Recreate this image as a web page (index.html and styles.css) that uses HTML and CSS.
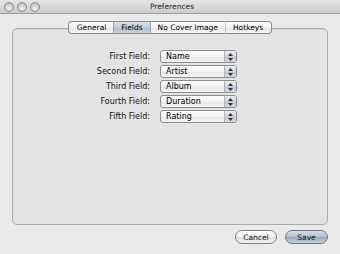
FILE: index.html
```html
<!DOCTYPE html>
<html lang="en">
<head>
  <meta charset="UTF-8">
  <title>Preferences</title>
  <link rel="stylesheet" href="styles.css">
</head>
<body>
  <div class="window">
    <div class="titlebar">
      <div class="lights">
        <span class="light"></span>
        <span class="light"></span>
        <span class="light"></span>
      </div>
      <div class="title">Preferences</div>
    </div>

    <div class="main">
      <div class="tabs">
        <div class="tab first">General</div>
        <div class="tab selected">Fields</div>
        <div class="tab">No Cover Image</div>
        <div class="tab last">Hotkeys</div>
      </div>

      <div class="box">
        <div class="fields">
          <label>First Field:</label>
          <div class="popup"><span>Name</span><i class="stepper"><svg width="5" height="8" viewBox="0 0 5 8"><path d="M0 3L2.5 0L5 3Z M0 5L2.5 8L5 5Z" fill="#333"/></svg></i></div>

          <label>Second Field:</label>
          <div class="popup"><span>Artist</span><i class="stepper"><svg width="5" height="8" viewBox="0 0 5 8"><path d="M0 3L2.5 0L5 3Z M0 5L2.5 8L5 5Z" fill="#333"/></svg></i></div>

          <label>Third Field:</label>
          <div class="popup"><span>Album</span><i class="stepper"><svg width="5" height="8" viewBox="0 0 5 8"><path d="M0 3L2.5 0L5 3Z M0 5L2.5 8L5 5Z" fill="#333"/></svg></i></div>

          <label>Fourth Field:</label>
          <div class="popup"><span>Duration</span><i class="stepper"><svg width="5" height="8" viewBox="0 0 5 8"><path d="M0 3L2.5 0L5 3Z M0 5L2.5 8L5 5Z" fill="#333"/></svg></i></div>

          <label>Fifth Field:</label>
          <div class="popup"><span>Rating</span><i class="stepper"><svg width="5" height="8" viewBox="0 0 5 8"><path d="M0 3L2.5 0L5 3Z M0 5L2.5 8L5 5Z" fill="#333"/></svg></i></div>
        </div>
      </div>

      <div class="buttons">
        <button class="btn">Cancel</button>
        <button class="btn default">Save</button>
      </div>
    </div>
  </div>
</body>
</html>
```

FILE: styles.css
```css
body {
  margin: 0;
  font-family: "DejaVu Sans", sans-serif;
  font-size: 8px;
  color: #000;
}

.window {
  width: 340px;
  height: 254px;
  overflow: hidden;
  background: repeating-linear-gradient(#ededed 0, #ededed 1px, #e7e7e7 1px, #e7e7e7 2px);
}

.titlebar {
  height: 13px;
  display: flex;
  align-items: center;
  background: linear-gradient(#e6e6e6, #cdcdcd);
  border-bottom: 1px solid #9c9c9c;
}

.lights {
  display: flex;
  gap: 3px;
  padding-left: 4px;
  width: 60px;
}

.light {
  width: 8px;
  height: 8px;
  border-radius: 50%;
  border: 1px solid #8e8e8e;
  background: radial-gradient(circle at 50% 70%, #f4f4f4, #c4c4c4 70%, #a9a9a9);
}

.title {
  flex: 1;
  text-align: center;
  margin-right: 60px;
  font-size: 7.5px;
  color: #222;
}

.main {
  padding: 7px 12px 0 12px;
}

.tabs {
  display: flex;
  justify-content: center;
  height: 13px;
  margin-bottom: -6px;
  position: relative;
  z-index: 1;
  font-size: 7.5px;
}

.tab {
  line-height: 11px;
  padding: 0 7px;
  border: 1px solid #8a8a8a;
  border-left: 1px solid #c4c4c4;
  border-right: none;
  background: linear-gradient(#ffffff, #f1f1f1 50%, #e4e4e4 51%, #f4f4f4);
}

.tab.first {
  border-left: 1px solid #8a8a8a;
  border-radius: 4px 0 0 4px;
  padding-left: 8px;
}

.tab.last {
  border-right: 1px solid #8a8a8a;
  border-radius: 0 4px 4px 0;
  padding-right: 8px;
}

.tab.selected {
  background: linear-gradient(#dce3ea, #c3cdd8 50%, #b2bfcd 51%, #c9d3dd);
  border-left-color: #9aa6b3;
}

.tab.selected + .tab {
  border-left-color: #9aa6b3;
}

.box {
  height: 174px;
  padding-top: 21px;
  border: 1px solid #acacac;
  border-radius: 5px;
  box-shadow: inset 0 1px 0 #d4d4d4;
  background: repeating-linear-gradient(#e6e6e6 0, #e6e6e6 1px, #e1e1e1 1px, #e1e1e1 2px);
}

.fields {
  display: grid;
  grid-template-columns: 137px 77px;
  grid-auto-rows: 13px;
  column-gap: 10px;
  row-gap: 2px;
}

.fields label {
  text-align: right;
  line-height: 13px;
  color: #111;
}

.popup {
  display: flex;
  border: 1px solid #8d8d8d;
  border-radius: 3px;
  overflow: hidden;
  background: linear-gradient(#ffffff, #f3f3f3 50%, #e6e6e6 51%, #f5f5f5);
}

.popup span {
  flex: 1;
  padding-left: 5px;
  line-height: 11px;
}

.stepper {
  width: 11px;
  display: flex;
  align-items: center;
  justify-content: center;
  border-left: 1px solid #b5b5b5;
  background: linear-gradient(#e9edf2, #ccd5df 50%, #b9c5d2 51%, #d3dbe4);
}

.buttons {
  display: flex;
  justify-content: flex-end;
  gap: 8px;
  margin-top: 5px;
}

.btn {
  height: 14px;
  width: 42px;
  padding: 0;
  font-family: "DejaVu Sans", sans-serif;
  font-size: 7.5px;
  color: #111;
  border: 1px solid #7e7e7e;
  border-radius: 7px;
  background: linear-gradient(#ffffff, #f0f0f0 50%, #dddddd 51%, #f4f4f4);
}

.btn.default {
  width: 43px;
  border-color: #6a7888;
  background: linear-gradient(#d6dee7, #b2bfcd 50%, #98a9bb 51%, #c3cfdb);
}
```
